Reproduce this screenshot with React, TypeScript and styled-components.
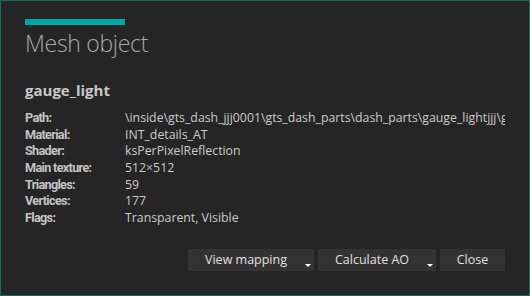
import React from "react";
import styled, { createGlobalStyle } from "styled-components";

const Global = createGlobalStyle`
  html, body { margin: 0; padding: 0; background: #252525; }
  body { width: 530px; height: 296px; overflow: hidden; }
`;

const Dialog = styled.div`
  box-sizing: border-box;
  width: 530px;
  height: 296px;
  background: #252525;
  border: 1px solid #1b6a61;
  padding: 18px 24px 24px 24px;
  display: flex;
  flex-direction: column;
  font-family: "Segoe UI", "Open Sans", "Noto Sans", sans-serif;
  color: #cccccc;
`;

const Accent = styled.div`
  width: 100px;
  height: 6px;
  background: #00a9a5;
`;

const Title = styled.h1`
  margin: 2px 0 0 0;
  font-size: 23px;
  line-height: 32px;
  font-weight: 300;
  color: #a8a8a8;
  letter-spacing: -0.3px;
`;

const Name = styled.h2`
  margin: 21px 0 0 0;
  font-size: 15px;
  line-height: 20px;
  font-weight: 700;
  color: #c8c8c8;
`;

const Props = styled.div`
  margin-top: 10px;
  display: grid;
  grid-template-columns: 100px minmax(0, 1fr);
  grid-auto-rows: 16.67px;
`;

const Label = styled.div`
  font-family: Roboto, "Liberation Sans", sans-serif;
  font-weight: 700;
  font-size: 12.6px;
  letter-spacing: -0.65px;
  line-height: 16.67px;
  color: #c4c4c4;
`;

const Value = styled.div`
  font-size: 12.3px;
  line-height: 16.67px;
  color: #cccccc;
  white-space: nowrap;
  overflow: hidden;
`;

const Footer = styled.div`
  margin-top: auto;
  display: flex;
  justify-content: flex-end;
  gap: 4px;
`;

const Button = styled.button<{ $w: number; $menu?: boolean }>`
  position: relative;
  box-sizing: border-box;
  height: 22px;
  width: ${(p) => p.$w}px;
  border: none;
  background: #333333;
  color: #e0e0e0;
  font-family: "Segoe UI", "Open Sans", "Noto Sans", sans-serif;
  font-size: 12.5px;
  padding: 0 ${(p) => (p.$menu ? "10px" : "0")} 0 0;
  line-height: 22px;
  text-align: center;
`;

const Caret = styled.span`
  position: absolute;
  right: 3px;
  bottom: 4px;
  width: 0;
  height: 0;
  border-left: 3px solid transparent;
  border-right: 3px solid transparent;
  border-top: 3px solid #ffffff;
`;

const rows: [string, string][] = [
  ["Path:", "\\inside\\gts_dash_jjj0001\\gts_dash_parts\\dash_parts\\gauge_lightjjj\\gauge_light"],
  ["Material:", "INT_details_AT"],
  ["Shader:", "ksPerPixelReflection"],
  ["Main texture:", "512×512"],
  ["Triangles:", "59"],
  ["Vertices:", "177"],
  ["Flags:", "Transparent, Visible"],
];

export default function App() {
  return (
    <>
      <Global />
      <Dialog>
        <Accent />
        <Title>Mesh object</Title>
        <Name>gauge_light</Name>
        <Props>
          {rows.map(([l, v]) => (
            <React.Fragment key={l}>
              <Label>{l}</Label>
              <Value>{v}</Value>
            </React.Fragment>
          ))}
        </Props>
        <Footer>
          <Button $w={126} $menu>
            View mapping
            <Caret />
          </Button>
          <Button $w={118} $menu>
            Calculate AO
            <Caret />
          </Button>
          <Button $w={65}>Close</Button>
        </Footer>
      </Dialog>
    </>
  );
}
